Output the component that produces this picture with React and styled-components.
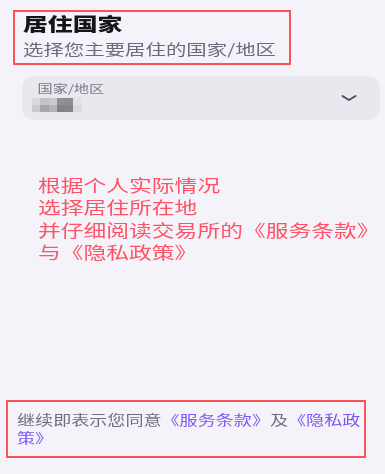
import React from "react";
import styled, { createGlobalStyle, css } from "styled-components";

const GlobalStyle = createGlobalStyle`
  html, body {
    margin: 0;
    padding: 0;
    background: #f4f3f9;
  }
  body {
    font-family: "Noto Sans CJK SC", "Noto Sans", sans-serif;
  }
`;

const wide = css`
  transform: scaleX(1.38);
  transform-origin: left top;
`;

const Page = styled.div`
  width: 385px;
  height: 474px;
  display: flex;
  flex-direction: column;
  background: #f4f3f9;
  overflow: hidden;
`;

const Highlight = styled.div`
  border: 2px solid #ff5256;
  box-sizing: border-box;
`;

const Header = styled(Highlight)`
  margin: 10px 0 0 13px;
  width: 278px;
  height: 55px;
  padding: 0 0 0 8px;
`;

const Title = styled.h1`
  ${wide};
  margin: 0;
  font-size: 18px;
  line-height: 23px;
  font-weight: 900;
  color: #15151c;
`;

const Subtitle = styled.p`
  ${wide};
  margin: 4px 0 0;
  font-size: 14.8px;
  line-height: 20px;
  color: #6c6b7e;
`;

const Select = styled.div`
  margin: 11px 5px 0 22px;
  height: 44px;
  border-radius: 12px;
  background: #e9e8ee;
  display: flex;
  align-items: center;
  padding: 0 23px 0 10px;
`;

const SelectText = styled.div`
  flex: 1;
  display: flex;
  flex-direction: column;
  align-self: flex-start;
  padding-top: 5px;
`;

const Label = styled.span`
  ${wide};
  padding-left: 4px;
  font-size: 11px;
  line-height: 14px;
  color: #7a7986;
`;

const Mosaic = styled.div`
  margin-top: 3px;
  display: grid;
  grid-template-columns: repeat(6, 8.3px);
  grid-template-rows: repeat(2, 7px);
  filter: blur(0.6px);
`;

const Cell = styled.span`
  background: ${(p) => p.$shade};
`;

const Notice = styled.div`
  ${wide};
  margin: 54px 0 0 38px;
  font-size: 16.5px;
  line-height: 22.3px;
  color: #ff5266;
`;

const Footer = styled(Highlight)`
  margin: auto 0 16px 6px;
  width: 360px;
  height: 58px;
  padding: 9px 0 0 9px;
`;

const FooterText = styled.p`
  ${wide};
  margin: 0;
  width: 252px;
  font-size: 13.1px;
  line-height: 18.3px;
  color: #6f6e7c;
`;

const Link = styled.span`
  color: #7d55f2;
`;

const shades = [
  "#d9d8de", "#c3c2c8", "#cbcad0", "#908f96", "#8d8c92", "#e2e1e6",
  "#cac9cf", "#a6a5ab", "#b4b3b9", "#828187", "#858489", "#dad9de",
];

const Chevron = () => (
  <svg width="16" height="8" viewBox="0 0 16 8" fill="none">
    <path
      d="M1.5 2 L8 6 L14.5 2"
      stroke="#4b4a5e"
      strokeWidth="2"
      strokeLinecap="round"
      strokeLinejoin="round"
    />
  </svg>
);

export default function App() {
  return (
    <Page>
      <GlobalStyle />
      <Header>
        <Title>居住国家</Title>
        <Subtitle>选择您主要居住的国家/地区</Subtitle>
      </Header>

      <Select>
        <SelectText>
          <Label>国家/地区</Label>
          <Mosaic>
            {shades.map((s, i) => (
              <Cell key={i} $shade={s} />
            ))}
          </Mosaic>
        </SelectText>
        <Chevron />
      </Select>

      <Notice>
        根据个人实际情况
        <br />
        选择居住所在地
        <br />
        并仔细阅读交易所的《服务条款》
        <br />
        与《隐私政策》
      </Notice>

      <Footer>
        <FooterText>
          继续即表示您同意<Link>《服务条款》</Link>及<Link>《隐私政策》</Link>
        </FooterText>
      </Footer>
    </Page>
  );
}
